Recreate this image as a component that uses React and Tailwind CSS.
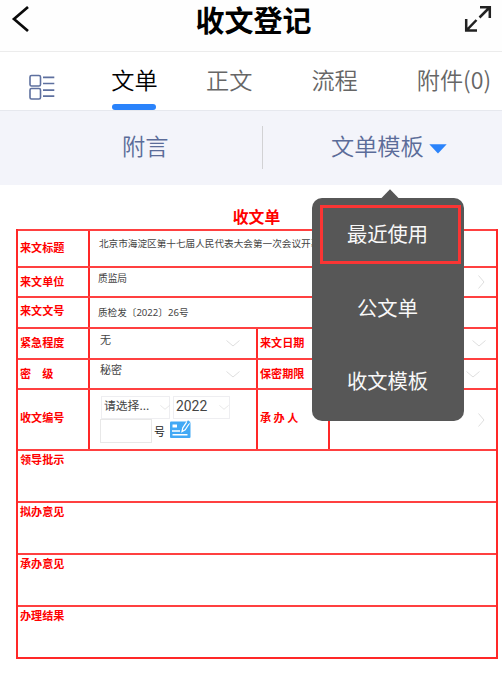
import React from 'react';

const opinions = ['领导批示', '拟办意见', '承办意见', '办理结果'];

const Chevron = ({ className = '' }) => (
  <svg className={className} width="14" height="7" viewBox="0 0 14 7" fill="none" stroke="#dedede">
    <path d="M0.5 0.5 L7 6 L13.5 0.5" />
  </svg>
);

const ArrowRight = ({ className = '' }) => (
  <svg className={className} width="7" height="14" viewBox="0 0 7 14" fill="none" stroke="#dedede">
    <path d="M0.5 0.5 L6 7 L0.5 13.5" />
  </svg>
);

const Label = ({ children, className = '' }) => (
  <div className={`shrink-0 flex items-center pl-[2px] text-[11.1px] leading-4 font-bold text-[#ff0000] whitespace-pre ${className}`}>
    {children}
  </div>
);

const Cell = ({ children, className = '' }) => (
  <div className={`min-w-0 border-l-2 border-[#ff2828] text-[#444] whitespace-nowrap ${className}`}>{children}</div>
);

const Row = ({ children, className = '' }) => (
  <div className={`flex border-t-2 border-[#ff4040] ${className}`}>{children}</div>
);

const Header = () => (
  <header className="h-[52px] flex items-start justify-between border-b border-[#ececec] bg-[#fefefe]">
    <svg className="mt-[5px] ml-[11px]" width="19" height="28" viewBox="0 0 19 28" fill="none" stroke="#0a0a0a" strokeWidth="2.7">
      <path d="M17 2 L3 14 L17 26" />
    </svg>
    <h1 className="ml-[13px] text-[29px] leading-[38px] font-bold text-black">收文登记</h1>
    <svg className="mt-[5px] mr-[10px]" width="28" height="28" viewBox="0 0 28 28" fill="none" stroke="#222" strokeWidth="2.5">
      <path d="M16 2.2 H25.8 V13 M25.5 2.5 L15.5 12.5" />
      <path d="M2.2 14 V25.6 H13 M2.5 25.3 L12.5 15" />
    </svg>
  </header>
);

const Tabs = () => (
  <nav className="h-[59px] flex border-b border-[#e6e8ee] text-[23.2px] leading-[34px] font-[350] text-[#666] whitespace-nowrap">
    <svg className="mt-[22px] ml-[29px] shrink-0" width="26" height="27" viewBox="0 0 26 27" fill="none" stroke="#5e709f" strokeWidth="1.6">
      <rect x="1" y="1.5" width="10.5" height="10.5" rx="1.5" />
      <rect x="1" y="14.5" width="10.5" height="10.5" rx="1.5" />
      <path d="M14 3.3 H25.3 M14 9.5 H25.3 M14 16.2 H25.3 M14 22.2 H25.3" strokeWidth="1.7" />
    </svg>
    <div className="ml-[56px] w-[47px] pt-[10px] flex flex-col items-center text-black">
      <span>文单</span>
      <span className="mt-[8px] ml-[-1px] w-[44px] h-[6px] shrink-0 rounded-full bg-[#2a83fb]" />
    </div>
    <span className="ml-[48px] pt-[10px]">正文</span>
    <span className="ml-[59px] pt-[10px]">流程</span>
    <span className="ml-[59px] pt-[10px]">附件(0)</span>
  </nav>
);

const SubBar = () => (
  <div className="h-[74px] flex bg-[#f3f4fa] text-[23.2px] leading-[34px] font-[350] text-[#5b6c99] whitespace-nowrap">
    <div className="w-[262px] pt-[17px] pl-[122px]">附言</div>
    <div className="mt-[15px] w-px h-[43px] bg-[#d2d2d4]" />
    <div className="relative flex pt-[17px] pl-[68px]">
      文单模板
      <svg className="mt-[16px] ml-[5px]" width="18" height="10" viewBox="0 0 18 10">
        <path d="M0.3 0.3 H17.7 L9 9.5 Z" fill="#2a83fb" />
      </svg>
      <Menu />
    </div>
  </div>
);

const Menu = () => (
  <div className="absolute left-[49px] top-[78px] z-10 w-[152px] flex flex-col items-center">
    <svg className="ml-[3px]" width="18" height="9" viewBox="0 0 18 9">
      <path d="M0.5 9 L9 0.3 L17.5 9 Z" fill="#575757" />
    </svg>
    <div className="w-[152px] h-[223px] rounded-[10px] bg-[#575757] p-2 pt-[7px] pr-[2px] text-center text-[20.3px] leading-[30px] font-normal text-[#f8f8f8]">
      <div className="w-[141px] h-[59px] border-[3px] border-[#fa3534] pt-[10px] pr-[6px]">最近使用</div>
      <div className="h-[59px] mt-[13px] pt-[15px] pr-[7px]">公文单</div>
      <div className="h-[59px] mt-[14px] pt-[15px] pr-[7px]">收文模板</div>
    </div>
  </div>
);

const Form = () => (
  <main className="pt-[20px] pl-4">
    <h2 className="w-[481px] text-center text-[15.8px] leading-6 font-bold text-[#ff0000]">收文单</h2>
    <div className="w-[482px] border-x-2 border-b-2 border-[#ff2828]">
      <Row className="h-[37px]">
        <Label className="w-[70px] pb-[3px]">来文标题</Label>
        <Cell className="flex-1 overflow-hidden pl-[9px] pt-[4px] text-[9.65px] leading-4">
          北京市海淀区第十七届人民代表大会第一次会议开幕
        </Cell>
      </Row>
      <Row className="h-[30px]">
        <Label className="w-[70px] pb-[3px]">来文单位</Label>
        <Cell className="flex-1 flex justify-between pl-[8px] pr-[11px] pt-[2px] text-[9.7px] leading-4">
          质监局
          <ArrowRight className="mt-[5px]" />
        </Cell>
      </Row>
      <Row className="h-[31px]">
        <Label className="w-[70px] pb-[5px]">来文文号</Label>
        <Cell className="flex-1 pl-[8px] pt-[6px] text-[9.6px] leading-4">
          质检发〔<span className="font-['Noto_Sans']">2022</span>〕<span className="font-['Noto_Sans']">26</span>号
        </Cell>
      </Row>
      <Row className="h-[31px]">
        <Label className="w-[70px] pb-[4px]">紧急程度</Label>
        <Cell className="w-[168px] flex justify-between pl-[10px] pr-[16px] pt-[2px] text-[11px] leading-4">
          无
          <Chevron className="mt-[9px]" />
        </Cell>
        <Label className="w-[72px] border-l-2 border-[#ff2828] pb-[4px]">来文日期</Label>
        <Cell className="flex-1 flex justify-end pr-[10px] pt-[11px]">
          <Chevron />
        </Cell>
      </Row>
      <Row className="h-[30px]">
        <Label className="w-[70px] pb-[3px]">密　级</Label>
        <Cell className="w-[168px] flex justify-between pl-[10px] pr-[16px] pt-[1px] text-[11px] leading-4">
          秘密
          <Chevron className="mt-[10px]" />
        </Cell>
        <Label className="w-[72px] border-l-2 border-[#ff2828] pb-[3px]">保密期限</Label>
        <Cell className="flex-1 flex justify-end pr-[16px] pt-[11px]">
          <Chevron />
        </Cell>
      </Row>
      <Row className="h-[61px]">
        <Label className="w-[70px] pb-[5px]">收文编号</Label>
        <Cell className="w-[168px] pl-[10px] pt-[6px]">
          <div className="flex">
            <div className="ml-[1px] w-[69px] h-[23px] flex border border-[#eeeef1] pl-[2px] text-[11.8px] leading-[16px]">
              <span className="w-[56px] shrink-0">请选择...</span>
              <Chevron className="mt-[7px] w-[10px] shrink-0" />
            </div>
            <div className="ml-[3px] w-[57px] h-[23px] flex border border-[#eeeef1] pl-[2px] font-[Roboto] text-[13.9px] leading-[18px]">
              <span className="w-[43px]">2022</span>
              <Chevron className="mt-[7px] w-[10px] shrink-0" />
            </div>
          </div>
          <div className="flex">
            <div className="w-[52px] h-[24px] border border-[#e8e8e8]" />
            <span className="ml-[2px] pt-[4px] text-[11px] leading-4 text-[#222]">号</span>
            <svg className="ml-[5px]" width="22" height="20" viewBox="0 0 22 20">
              <rect x="0" y="2.5" width="20.5" height="16.5" rx="1" fill="#42a9f5" />
              <path d="M2.5 7 H7" stroke="#fff" strokeWidth="3" />
              <path d="M2 12 H10 M2.5 15.8 H17.5" stroke="#fff" strokeWidth="1.6" />
              <path d="M12 12.5 L12.8 8.8 L18 1.2 L20.3 3 L15.2 10.8 Z" fill="#42a9f5" stroke="#fff" strokeWidth="1.2" />
              <path d="M18 1.2 L20.3 3 L19 5 L16.6 3.2 Z" fill="#42a9f5" />
            </svg>
          </div>
        </Cell>
        <Label className="w-[72px] border-l-2 border-[#ff2828] pb-[5px]">承 办 人</Label>
        <Cell className="flex-1 flex justify-end items-center pr-[11px]">
          <ArrowRight />
        </Cell>
      </Row>
      {opinions.map((name) => (
        <Row key={name} className="h-[52px]">
          <Label className="w-[70px] items-start">{name}</Label>
        </Row>
      ))}
    </div>
  </main>
);

const App = () => (
  <div className="w-[502px] h-[685px] overflow-hidden bg-white font-['Noto_Sans_CJK_SC',sans-serif]">
    <Header />
    <Tabs />
    <SubBar />
    <Form />
  </div>
);

export default App;
